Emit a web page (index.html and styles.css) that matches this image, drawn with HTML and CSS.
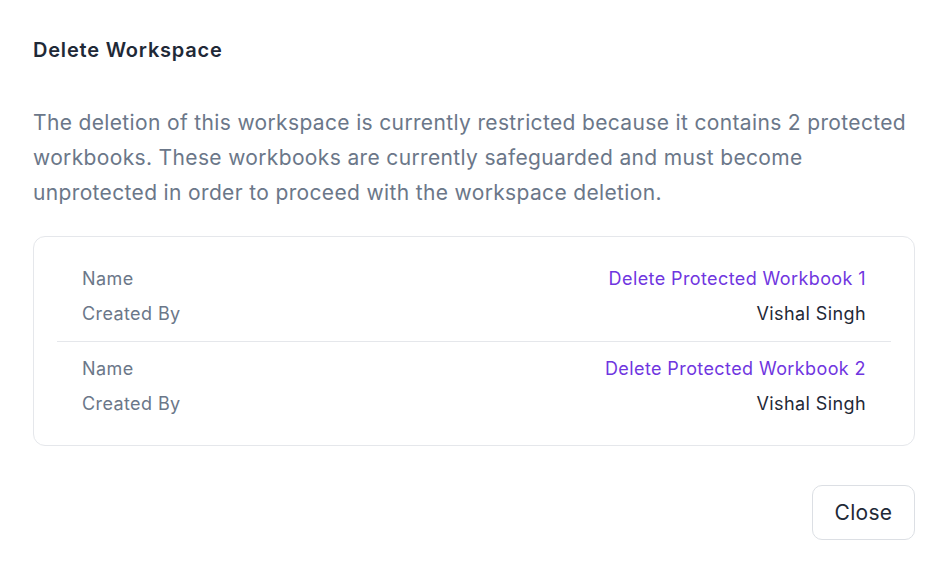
FILE: index.html
```html
<!DOCTYPE html>
<html lang="en">
<head>
<meta charset="utf-8">
<title>Delete Workspace</title>
<link rel="stylesheet" href="styles.css">
</head>
<body>
<div class="modal">
  <h2 class="title">Delete Workspace</h2>
  <p class="desc">The deletion of this workspace is currently restricted because it contains 2 protected workbooks. These workbooks are currently safeguarded and must become unprotected in order to proceed with the workspace deletion.</p>
  <div class="card">
    <div class="item">
      <div class="row"><span class="label">Name</span><span class="link">Delete Protected Workbook 1</span></div>
      <div class="row"><span class="label">Created By</span><span class="value">Vishal Singh</span></div>
    </div>
    <div class="item">
      <div class="row"><span class="label">Name</span><span class="link">Delete Protected Workbook 2</span></div>
      <div class="row"><span class="label">Created By</span><span class="value">Vishal Singh</span></div>
    </div>
  </div>
  <div class="footer">
    <button class="btn">Close</button>
  </div>
</div>
</body>
</html>
```
FILE: styles.css
```css
* { box-sizing: border-box; }
html, body { margin: 0; padding: 0; }
body {
  width: 944px;
  height: 572px;
  background: #ffffff;
  font-family: Inter, "Liberation Sans", sans-serif;
  overflow: hidden;
}
.modal {
  width: 944px;
  height: 572px;
  background: #fff;
  padding: 36px 29px 0 33px;
}
.title {
  margin: 0;
  font-size: 20px;
  font-weight: 600;
  color: #1f2937;
  line-height: 28px;
  letter-spacing: 0.8px;
}
.desc {
  margin: 41px 0 0;
  font-size: 21px;
  line-height: 35px;
  color: #6b7789;
  letter-spacing: 0.35px;
}
.card {
  margin-top: 26px;
  border: 1px solid #e5e7eb;
  border-radius: 12px;
  padding: 16px 23px 14px 23px;
}
.item {
  padding: 8px 25px 10px 25px;
}
.item + .item {
  border-top: 1px solid #e5e7eb;
  padding-top: 9px;
}
.row {
  display: flex;
  justify-content: space-between;
  font-size: 18px;
  line-height: 35px;
  letter-spacing: 0.4px;
}
.label { color: #6b7789; }
.link { color: #7036df; }
.value { color: #1f2937; }
.footer {
  display: flex;
  justify-content: flex-end;
  margin-top: 39px;
}
.btn {
  font-family: inherit;
  font-size: 21px;
  letter-spacing: 0.3px;
  color: #1f2937;
  background: #fff;
  border: 1px solid #dcdfe4;
  border-radius: 10px;
  width: 103px;
  height: 55px;
  padding: 0;
  cursor: pointer;
}
```
